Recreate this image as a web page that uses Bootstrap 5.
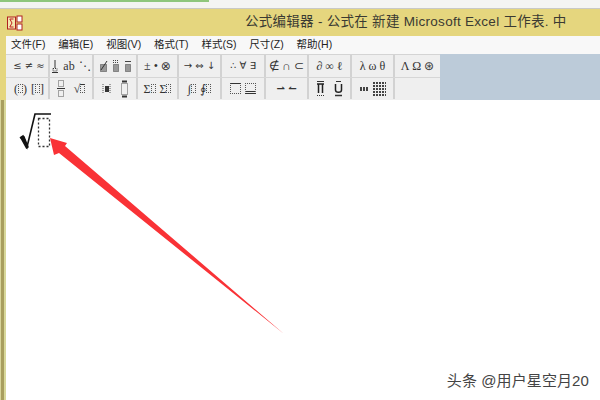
<!DOCTYPE html>
<html lang="zh">
<head>
<meta charset="UTF-8">
<title>公式编辑器</title>
<link href="https://cdn.jsdelivr.net/npm/bootstrap@5.3.2/dist/css/bootstrap.min.css" rel="stylesheet">
<style>
    html, body { height: 400px; overflow: hidden; background: #fff; }
    body { font-family: "Liberation Sans", "Noto Sans CJK SC", sans-serif; color: #222; }
    .top-strip { height: 9px; background: #f4f4f2; border-bottom: 1px solid #c9c9c4; }
    .top-green { height: 2px; width: 209px; background: #8fc67c; }
    .eq-title { height: 27px; background: #e5d67e; padding-left: 7px; }
    .eq-title-text { margin-left: 222px; font-size: 13.5px; color: #3a3a32; white-space: nowrap; letter-spacing: .28px; }
    .eq-body {
        height: 364px; padding-left: 6px;
        background:
            linear-gradient(#e5d67e, #e5d67e) 0 0 / 6px 64px no-repeat,
            linear-gradient(90deg, #d8d49a 0 1px, #a89e5e 1px 4px, #d8d89a 4px 6px) 0 0 / 6px 100% no-repeat;
    }
    .eq-menu { height: 18px; background: #f8f8f8; font-size: 10.5px; padding-left: 5px; gap: 12.9px; color: #222; }
    .eq-tools { height: 46px; }
    .tool-pane { width: 434px; background: #efefef; border-top: 1px solid #d4d4d4; }
    .tool-side { flex: 1; background: #bccbd9; }
    .tool-row { display: grid; height: 22px; padding-left: 4px; grid-template-columns: 40px 44px 44px 41px 43px 44px 43px 43px 43px 45px; }
    .tool-row + .tool-row { border-top: 1px solid #d6d6d6; }
    .tool-cell { border-right: 2px solid #d2d2d2; gap: 4px; font-family: "Liberation Serif", "DejaVu Sans", serif; font-size: 12px; line-height: 1; color: #333; white-space: nowrap; overflow: hidden; }
    .tool-cell:last-child { border-right: 0; }
    .tool-sans { font-family: "DejaVu Sans", sans-serif; font-size: 10px; }
    .tool-wide { gap: 9px; }
    .slot { display: inline-block; width: 5px; height: 9px; border: 1px dotted #555; }
    .slot-wide { width: 11px; height: 11px; }
    .slot-lined { border-bottom: 3px double #333; }
    .slot-top { border-top: 1px solid #333; }
    .dot-grid { width: 13px; height: 15px; background: repeating-linear-gradient(90deg, transparent 0 2px, #efefef 2px 3px), repeating-linear-gradient(0deg, #444 0 2px, #efefef 2px 3px); }
    .dot-row { width: 9px; height: 4px; background: repeating-linear-gradient(90deg, #444 0 2px, #efefef 2px 3px); }
    .eq-canvas { height: 300px; background: #fff; padding: 12px 11px 8px 12px; }
    .root-mark { display: block; }
    .pointer-arrow { position: absolute; left: 0; top: 0; pointer-events: none; }
    .mark-text { font-size: 15px; color: #444; letter-spacing: .1px; }
</style>
</head>
<body>

<div class="top-strip"><div class="top-green"></div></div>

<div class="eq-title d-flex align-items-center">
    <svg width="16" height="16" viewBox="0 0 16 16">
        <rect x=".5" y="2" width="8" height="12" fill="#f4e7b0" stroke="#b02020"/>
        <path d="M6.500 4H2.800L5 8 2.800 12H6.500" fill="none" stroke="#c02020"/>
        <rect x="10" y="1" width="5" height="6" fill="#fff" stroke="#b02020"/>
        <rect x="10" y="9" width="5" height="6" fill="#fff" stroke="#b02020"/>
    </svg>
    <span class="eq-title-text">公式编辑器 - 公式在 新建 Microsoft Excel 工作表. 中</span>
</div>

<div class="eq-body">
    <div class="eq-menu d-flex align-items-center">
        <span>文件(F)</span><span>编辑(E)</span><span>视图(V)</span><span>格式(T)</span><span>样式(S)</span><span>尺寸(Z)</span><span>帮助(H)</span>
    </div>

    <div class="eq-tools d-flex">
        <div class="tool-pane">
            <div class="tool-row">
                <div class="tool-cell tool-sans d-flex align-items-center justify-content-center">≤ ≠ ≈</div>
                <div class="tool-cell d-flex align-items-center justify-content-center">
                    <svg width="8" height="14" viewBox="0 0 8 14"><path d="M4 1V9" stroke="#333"/><path d="M2 9.500H6V12H2Z" fill="none" stroke="#333" stroke-dasharray="1 1"/><path d="M1 13.500H7" stroke="#333"/></svg>
                    <span>ab</span><span>⋱</span>
                </div>
                <div class="tool-cell d-flex align-items-center justify-content-center">
                    <svg width="9" height="14" viewBox="0 0 9 14"><rect x="1.500" y="5.500" width="6" height="7" fill="#999" stroke="#444" stroke-dasharray="1 1"/><path d="M2 11L8 2" stroke="#333"/></svg>
                    <svg width="8" height="14" viewBox="0 0 8 14"><path d="M1 1.500H7M1 3.500H7" stroke="#444" stroke-dasharray="1 1"/><rect x="1.500" y="5.500" width="5" height="7" fill="#999" stroke="#444" stroke-dasharray="1 1"/></svg>
                    <svg width="8" height="14" viewBox="0 0 8 14"><path d="M1 2.500H7" stroke="#444"/><rect x="1.500" y="5.500" width="5" height="7" fill="#999" stroke="#444" stroke-dasharray="1 1"/></svg>
                </div>
                <div class="tool-cell d-flex align-items-center justify-content-center">± • ⊗</div>
                <div class="tool-cell tool-sans d-flex align-items-center justify-content-center">→ ⇔ ↓</div>
                <div class="tool-cell tool-sans d-flex align-items-center justify-content-center">∴ ∀ ∃</div>
                <div class="tool-cell d-flex align-items-center justify-content-center">∉ ∩ ⊂</div>
                <div class="tool-cell d-flex align-items-center justify-content-center">∂ ∞ ℓ</div>
                <div class="tool-cell d-flex align-items-center justify-content-center">λ ω θ</div>
                <div class="tool-cell d-flex align-items-center justify-content-center">Λ Ω ⊛</div>
            </div>
            <div class="tool-row">
                <div class="tool-cell d-flex align-items-center justify-content-center"><span>(<i class="slot"></i>)</span><span>[<i class="slot"></i>]</span></div>
                <div class="tool-cell d-flex align-items-center justify-content-center tool-wide">
                    <svg width="8" height="19" viewBox="0 0 8 19"><rect x="1.500" y="1.500" width="5" height="6" fill="none" stroke="#555" stroke-dasharray="1 1"/><path d="M0 9.500H8" stroke="#333"/><rect x="1.500" y="11.500" width="5" height="6" fill="none" stroke="#555" stroke-dasharray="1 1"/></svg>
                    <span>√<i class="slot slot-top"></i></span>
                </div>
                <div class="tool-cell d-flex align-items-center justify-content-center tool-wide">
                    <svg width="9" height="12" viewBox="0 0 9 12"><path d="M1 1V11M8 1V11" stroke="#555" stroke-dasharray="1 1"/><rect x="3" y="3" width="4" height="6" fill="#333"/></svg>
                    <svg width="9" height="18" viewBox="0 0 9 18"><rect x="1.500" y="3.500" width="6" height="11" fill="none" stroke="#555" stroke-dasharray="1 1"/><path d="M2 1.500H7M2 16.500H7" stroke="#333" stroke-width="2"/></svg>
                </div>
                <div class="tool-cell d-flex align-items-center justify-content-center"><span>Σ<i class="slot"></i></span><span>Σ<i class="slot"></i></span></div>
                <div class="tool-cell d-flex align-items-center justify-content-center"><span>∫<i class="slot"></i></span><span>∮<i class="slot"></i></span></div>
                <div class="tool-cell d-flex align-items-center justify-content-center"><i class="slot slot-wide slot-top"></i><i class="slot slot-wide slot-lined"></i></div>
                <div class="tool-cell tool-sans fw-bold d-flex align-items-center justify-content-center">⇀ ↼</div>
                <div class="tool-cell d-flex align-items-center justify-content-center tool-wide">
                    <svg width="9" height="17" viewBox="0 0 9 17"><path d="M1 1.500H8" stroke="#333"/><path d="M1 4H8M2.500 4V13M6.500 4V13" stroke="#222" stroke-width="1.500"/><path d="M1 15.500H8" stroke="#333" stroke-dasharray="1 1"/></svg>
                    <svg width="9" height="17" viewBox="0 0 9 17"><path d="M2 1.500H7" stroke="#333"/><path d="M1.500 4V10C1.500 13 7.500 13 7.500 10V4" fill="none" stroke="#222" stroke-width="1.500"/><path d="M1 15.500H8" stroke="#333" stroke-width="1.500"/></svg>
                </div>
                <div class="tool-cell d-flex align-items-center justify-content-center"><i class="dot-row"></i><i class="dot-grid"></i></div>
                <div class="tool-cell"></div>
            </div>
        </div>
        <div class="tool-side"></div>
    </div>

    <div class="eq-canvas d-flex flex-column justify-content-between">
        <svg class="root-mark" width="40" height="40" viewBox="0 0 40 40">
            <path d="M2 26L5 24 9 35 17 2H33" fill="none" stroke="#111" stroke-width="1.600"/>
            <path d="M3 26L6 25 10 35 8.500 36Z" fill="#111" stroke="#111" stroke-width="1.500"/>
            <rect x="20.500" y="6.500" width="11" height="28" fill="none" stroke="#333" stroke-width="1.300" stroke-dasharray="2 2"/>
        </svg>
        <div class="mark-text text-end">头条 @用户星空月20</div>
    </div>
</div>

<svg class="pointer-arrow" width="600" height="400" viewBox="0 0 600 400">
    <polygon points="50,138 67,143 65,146 284,334 59,153 54,155" fill="#f93236"/>
</svg>

<script src="https://cdn.jsdelivr.net/npm/bootstrap@5.3.2/dist/js/bootstrap.bundle.min.js"></script>
</body>
</html>
